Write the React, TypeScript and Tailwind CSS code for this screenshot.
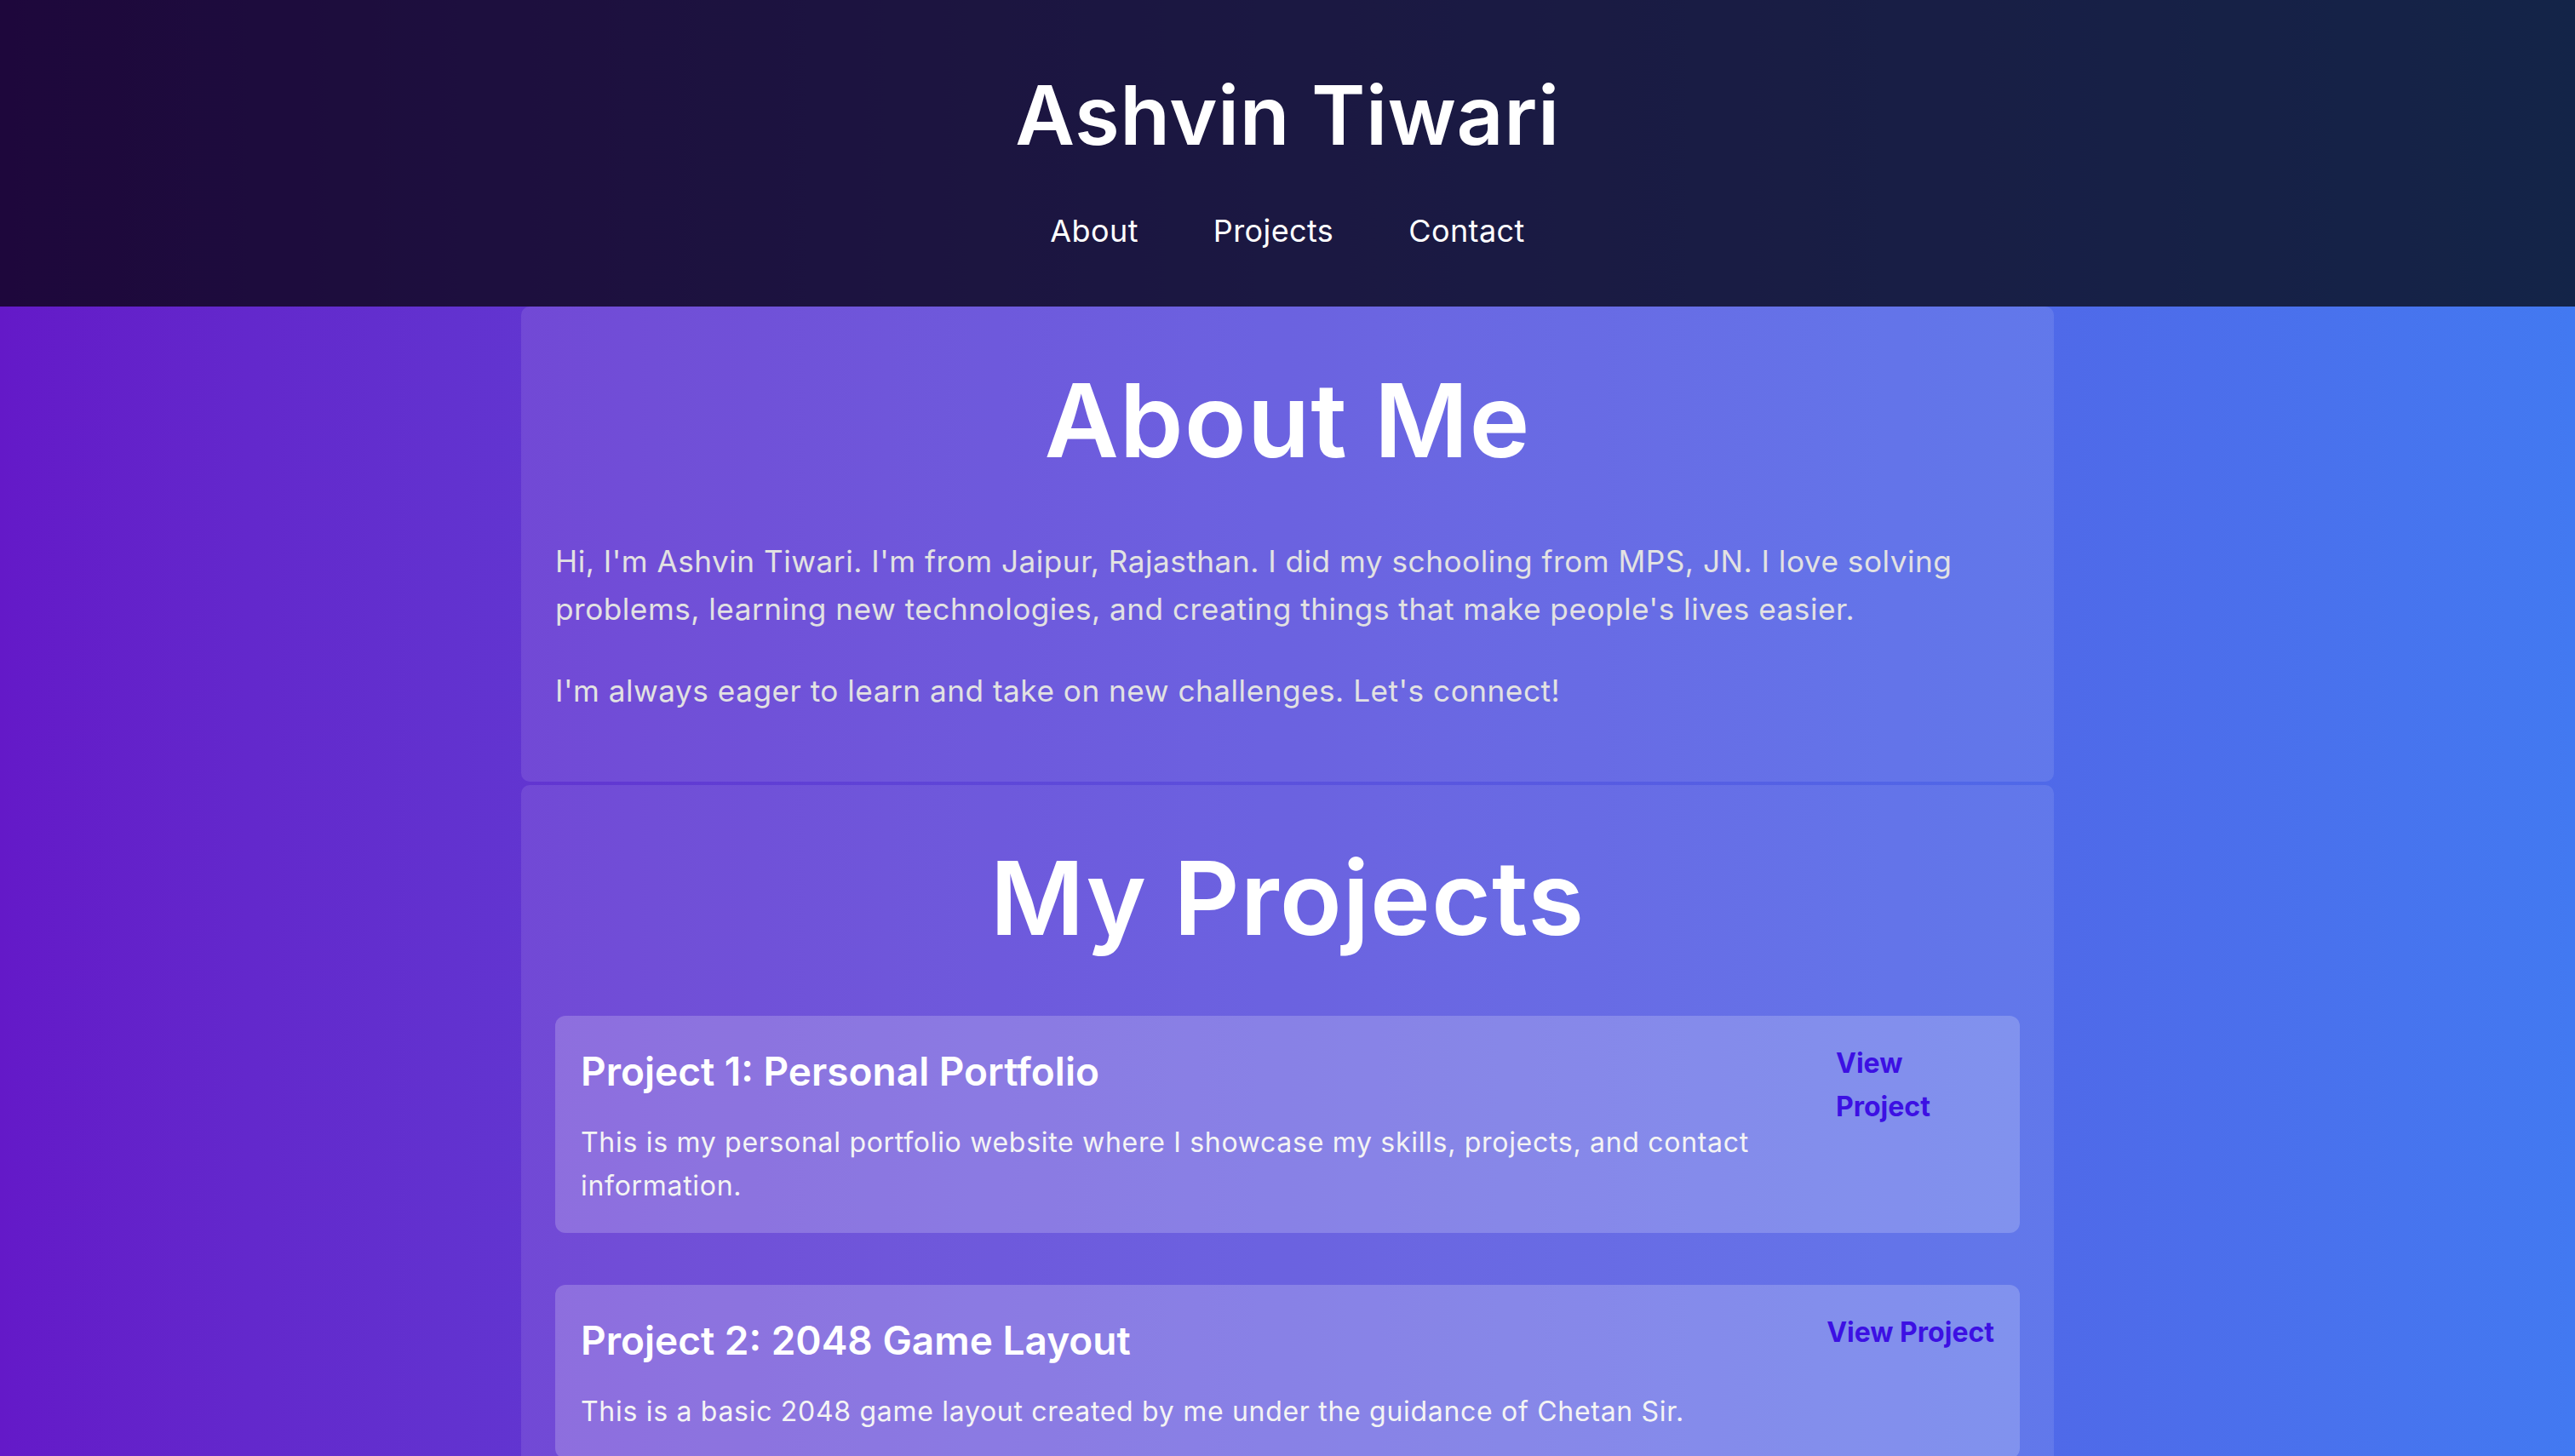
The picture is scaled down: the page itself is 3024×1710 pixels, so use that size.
import React from "react";

const projects = [
  {
    title: "Project 1: Personal Portfolio",
    desc: "This is my personal portfolio website where I showcase my skills, projects, and contact information.",
    linkClass: "w-[186px] shrink-0",
  },
  {
    title: "Project 2: 2048 Game Layout",
    desc: "This is a basic 2048 game layout created by me under the guidance of Chetan Sir.",
    linkClass: "shrink-0 whitespace-nowrap",
  },
];

export default function App() {
  return (
    <div className="min-h-screen bg-gradient-to-r from-[#6419c8] to-[#4279f1] font-['Inter',sans-serif] text-white">
      <header className="h-[360px] bg-black/70 flex flex-col items-center">
        <h1 className="mt-[87px] text-[96px] leading-none font-semibold tracking-[0.6px]">Ashvin Tiwari</h1>
        <nav className="mt-[70px] flex gap-[88px] text-[36px] leading-none tracking-[0.4px]">
          {["About", "Projects", "Contact"].map((item) => (
            <a key={item} href={`#${item.toLowerCase()}`} className="text-white">
              {item}
            </a>
          ))}
        </nav>
      </header>

      <main className="w-[1800px] mx-auto flex flex-col gap-[4px]">
        <section id="about" className="bg-white/10 rounded-[10px] px-[40px] pt-[74px] pb-[79px]">
          <h2 className="text-center text-[120px] leading-none font-semibold tracking-[1px] mb-[77px]">About Me</h2>
          <p className="text-[35.2px] leading-[56px] tracking-[0.5px] text-[#e2e2e2]">
            Hi, I'm Ashvin Tiwari. I'm from Jaipur, Rajasthan. I did my schooling from MPS, JN. I love solving problems, learning new technologies, and creating things that make people's lives easier.
          </p>
          <p className="mt-[40px] text-[35.2px] leading-[56px] tracking-[0.5px] text-[#e2e2e2]">
            I'm always eager to learn and take on new challenges. Let's connect!
          </p>
        </section>

        <section id="projects" className="bg-white/10 rounded-[10px] px-[40px] pt-[73px] pb-[60px]">
          <h2 className="text-center text-[120px] leading-none font-semibold tracking-[1px] mb-[78px]">My Projects</h2>
          <div className="flex flex-col gap-[61px]">
            {projects.map((p) => (
              <div key={p.title} className="bg-white/20 rounded-[12px] p-[30px] flex justify-between gap-[40px]">
                <div className="flex-1 min-w-0">
                  <h3 className="text-[46px] leading-[70px] font-semibold">{p.title}</h3>
                  <p className="mt-[23px] text-[32px] leading-[51px] tracking-[0.7px] text-[#f4f4f4]">{p.desc}</p>
                </div>
                <a href="#" className={`${p.linkClass} text-[32px] leading-[51px] font-bold text-[#3c10e3]`}>
                  View Project
                </a>
              </div>
            ))}
          </div>
        </section>
      </main>
    </div>
  );
}
